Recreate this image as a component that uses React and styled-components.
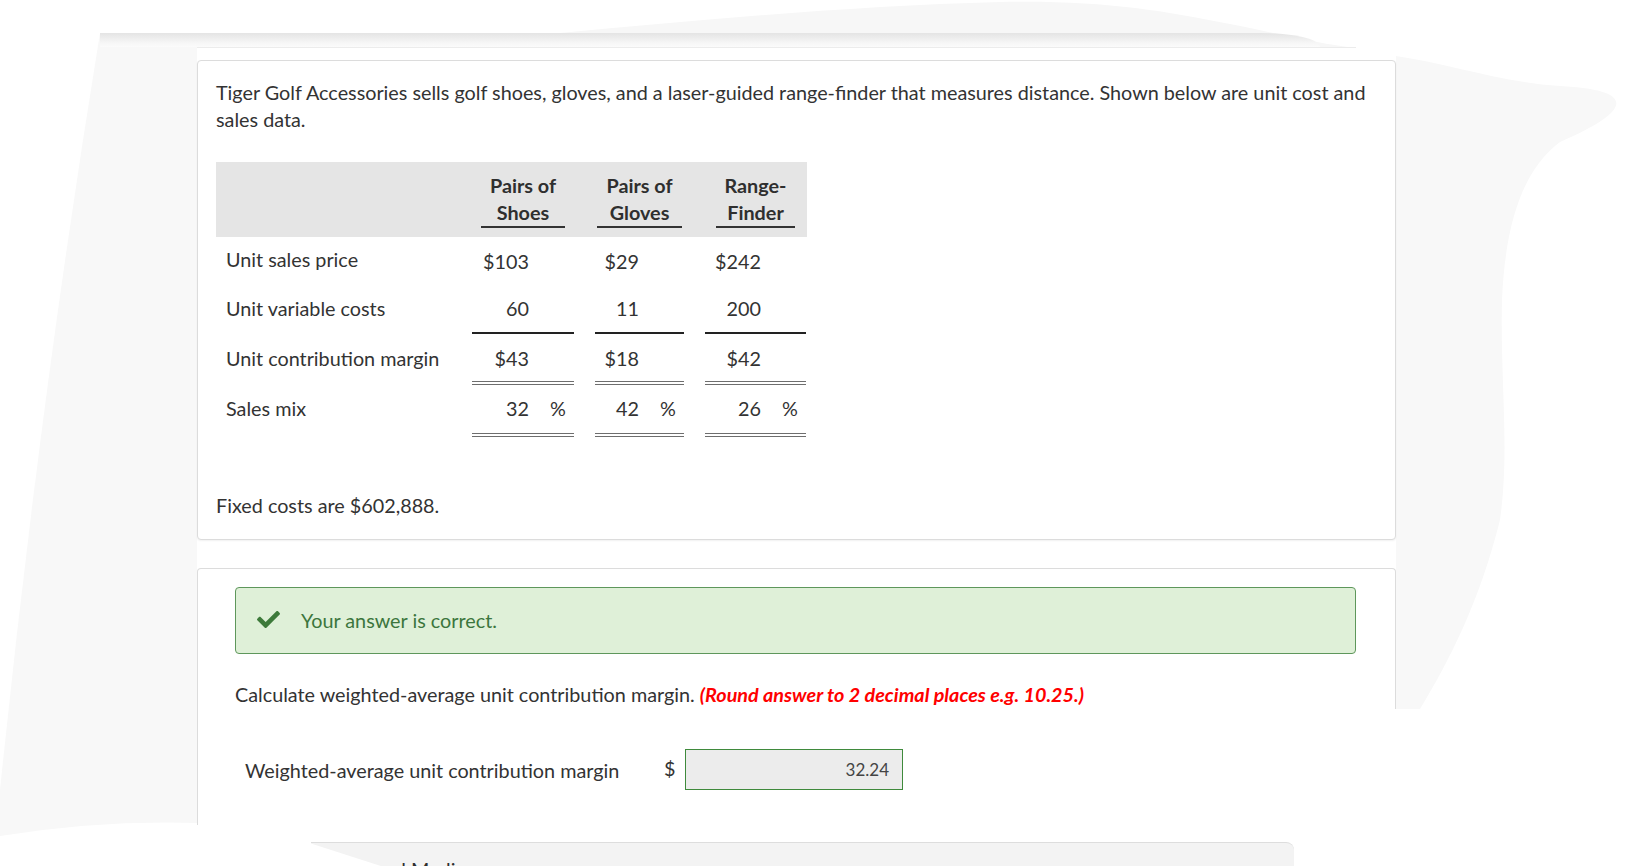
import React from "react";
import styled, { createGlobalStyle } from "styled-components";
import { FaCheck } from "react-icons/fa";

const GlobalStyle = createGlobalStyle`
  html, body {
    margin: 0;
    padding: 0;
    background: #ffffff;
  }
  body {
    font-family: Lato, "Open Sans", "Liberation Sans", sans-serif;
    color: #333333;
  }
`;

const products = [
  { key: "shoes", head: ["Pairs of", "Shoes"], price: "$103", variable: "60", margin: "$43", mix: "32" },
  { key: "gloves", head: ["Pairs of", "Gloves"], price: "$29", variable: "11", margin: "$18", mix: "42" },
  { key: "range", head: ["Range-", "Finder"], price: "$242", variable: "200", margin: "$42", mix: "26" },
];

// one table row of numbers: label, then a cell per product with spacer columns between
const NumberRow = ({ label, field, line, unit, h, lift }) => (
  <DataRow h={h}>
    <Label lift={lift}>{label}</Label>
    {products.map((p, i) => (
      <React.Fragment key={p.key}>
        {i > 0 && <span />}
        <NumCell line={line} lift={lift}>
          <Value>{p[field]}</Value>
          <Unit>{unit}</Unit>
        </NumCell>
      </React.Fragment>
    ))}
  </DataRow>
);

const App = () => {
  return (
    <Page>
      <GlobalStyle />
      <Backdrop viewBox="0 0 1627 866" preserveAspectRatio="none">
        <path d="M560 33 C700 20 850 6 1000 2 C1100 0 1160 10 1230 24 C1290 36 1320 44 1356 48 L1356 48 L560 48 Z" fill="#f7f7f7" />
        <path d="M100 33 L197 33 L197 823 Q100 820 0 836 L0 790 Q40 400 100 33 Z" fill="#f8f8f8" />
        <path d="M1396 56 C1450 64 1500 82 1560 86 C1640 90 1630 112 1560 142 C1520 172 1505 230 1502 300 C1500 380 1510 450 1500 520 C1480 600 1450 660 1420 709 L1396 709 Z" fill="#f8f8f8" />
      </Backdrop>

      <Column>
        <TopStrip />
        <Divider />

        <Card>
          <Para>
            Tiger Golf Accessories sells golf shoes, gloves, and a laser-guided range-finder that measures distance. Shown below are unit cost and sales data.
          </Para>

          <Table>
            <HeadRow>
              <span />
              {products.map((p, i) => (
                <React.Fragment key={p.key}>
                  {i > 0 && <span />}
                  <HeadCell>
                    <HeadLabel>
                      {p.head[0]}
                      <br />
                      {p.head[1]}
                    </HeadLabel>
                  </HeadCell>
                </React.Fragment>
              ))}
            </HeadRow>

            <NumberRow label="Unit sales price" field="price" h={47} />
            <NumberRow label="Unit variable costs" field="variable" line="single" h={50} />
            <NumberRow label="Unit contribution margin" field="margin" line="double" h={51} />
            <NumberRow label="Sales mix" field="mix" line="double" unit="%" h={52} lift={3} />
          </Table>

          <FixedCosts>Fixed costs are $602,888.</FixedCosts>
        </Card>

        <AnswerCard>
          <Success>
            <FaCheck size={23} color="#3d7a3a" />
            <span>Your answer is correct.</span>
          </Success>

          <Prompt>
            Calculate weighted-average unit contribution margin. <Hint>(Round answer to 2 decimal places e.g. 10.25.)</Hint>
          </Prompt>

          <AnswerRow>
            <AnswerLabel>Weighted-average unit contribution margin</AnswerLabel>
            <Dollar>$</Dollar>
            <AnswerInput>32.24</AnswerInput>
          </AnswerRow>
        </AnswerCard>

        <BottomStrip>
          <StripText>Additional Media</StripText>
        </BottomStrip>
      </Column>

      <TornEdge />
    </Page>
  );
};

const Page = styled.div`
  position: relative;
  width: 1627px;
  height: 866px;
  overflow: hidden;
  background: #ffffff;
`;

const Backdrop = styled.svg`
  position: absolute;
  left: 0;
  top: 0;
  width: 1627px;
  height: 866px;
  z-index: 0;
`;

const Column = styled.div`
  position: relative;
  z-index: 1;
  display: flex;
  flex-direction: column;
  width: 1199px;
  margin-left: 197px;
  padding-top: 33px;
`;

const TopStrip = styled.div`
  margin-left: -97px;
  width: 1220px;
  height: 14px;
  background: linear-gradient(#e4e4e4, #f6f6f6 70%, #fbfbfb);
  border-top-right-radius: 60px 14px;
`;

const Divider = styled.div`
  width: 1159px;
  height: 1px;
  background: #ececec;
  margin-bottom: 12px;
`;

const Card = styled.div`
  display: flex;
  flex-direction: column;
  background: #ffffff;
  border: 1px solid #dcdcdc;
  border-radius: 4px;
  box-shadow: 0 1px 2px rgba(0, 0, 0, 0.06);
  padding: 18px 16px 20px 18px;
`;

const Para = styled.p`
  margin: 0;
  font-size: 19.8px;
  line-height: 27px;
`;

const Table = styled.div`
  display: flex;
  flex-direction: column;
  width: 591px;
  margin-top: 29px;
`;

const cols = "256px 102px 21px 89px 21px 101px";

const HeadRow = styled.div`
  display: grid;
  grid-template-columns: ${cols};
  height: 75px;
  align-items: end;
  padding-bottom: 9px;
  box-sizing: border-box;
  background: #e5e5e5;
`;

const HeadCell = styled.div`
  display: flex;
  justify-content: center;
`;

const HeadLabel = styled.div`
  font-size: 19.8px;
  line-height: 27px;
  font-weight: 700;
  color: #2f2f2f;
  text-align: center;
  padding: 0 9px;
  border-bottom: 2px solid #333333;
`;

const DataRow = styled.div`
  display: grid;
  grid-template-columns: ${cols};
  height: ${(p) => p.h}px;
`;

const Label = styled.div`
  display: flex;
  align-items: center;
  padding-left: 10px;
  padding-bottom: ${(p) => (p.lift || 0) + 3}px;
  font-size: 19.8px;
`;

const NumCell = styled.div`
  display: flex;
  justify-content: flex-end;
  align-items: center;
  padding-bottom: ${(p) => p.lift || 0}px;
  font-size: 19.8px;
  border-bottom: ${(p) =>
    p.line === "single" ? "2px solid #222222" : p.line === "double" ? "4px double #6e6e6e" : "none"};
`;

const Value = styled.span``;

const Unit = styled.span`
  width: 45px;
  box-sizing: border-box;
  padding-left: 21px;
`;

const FixedCosts = styled.p`
  margin: 55px 0 0;
  font-size: 19.8px;
  line-height: 27px;
`;

const AnswerCard = styled.div`
  display: flex;
  flex-direction: column;
  margin-top: 28px;
  height: 257px;
  box-sizing: border-box;
  background: #ffffff;
  border: 1px solid #dcdcdc;
  border-bottom: none;
  border-radius: 4px 4px 0 0;
  padding: 18px 39px 0 37px;
`;

const Success = styled.div`
  display: flex;
  align-items: center;
  gap: 21px;
  height: 67px;
  box-sizing: border-box;
  padding: 0 0 2px 21px;
  background: #dff0d8;
  border: 1px solid #5e975b;
  border-radius: 4px;
  color: #3c763d;
  font-size: 19.8px;
`;

const Prompt = styled.p`
  margin: 27px 0 0;
  font-size: 19.8px;
  line-height: 27px;
`;

const Hint = styled.span`
  color: #ff0000;
  font-style: italic;
  font-weight: 700;
`;

const AnswerRow = styled.div`
  display: flex;
  align-items: center;
  margin-top: 41px;
  padding-left: 10px;
`;

const AnswerLabel = styled.span`
  width: 419px;
  font-size: 19.8px;
`;

const Dollar = styled.span`
  width: 21px;
  font-size: 19.8px;
  margin-top: -4px;
`;

const AnswerInput = styled.div`
  width: 218px;
  height: 41px;
  box-sizing: border-box;
  display: flex;
  align-items: center;
  justify-content: flex-end;
  padding-right: 13px;
  background: #ececec;
  border: 1px solid #3f8a3c;
  font-size: 17px;
  color: #444444;
`;

const BottomStrip = styled.div`
  margin: 17px 0 0 114px;
  width: 983px;
  height: 30px;
  padding: 13px 0 0 6px;
  box-sizing: border-box;
  background: #f3f3f3;
  border-top: 1px solid #dddddd;
  border-top-right-radius: 8px;
  clip-path: polygon(0 0, 100% 0, 100% 100%, 9% 100%, 0 5%);
`;

const StripText = styled.span`
  font-size: 19.8px;
  line-height: 27px;
  color: #2f2f2f;
`;

const TornEdge = styled.div`
  position: absolute;
  z-index: 2;
  left: 1380px;
  top: 709px;
  width: 247px;
  height: 157px;
  background: #ffffff;
`;

export default App;
